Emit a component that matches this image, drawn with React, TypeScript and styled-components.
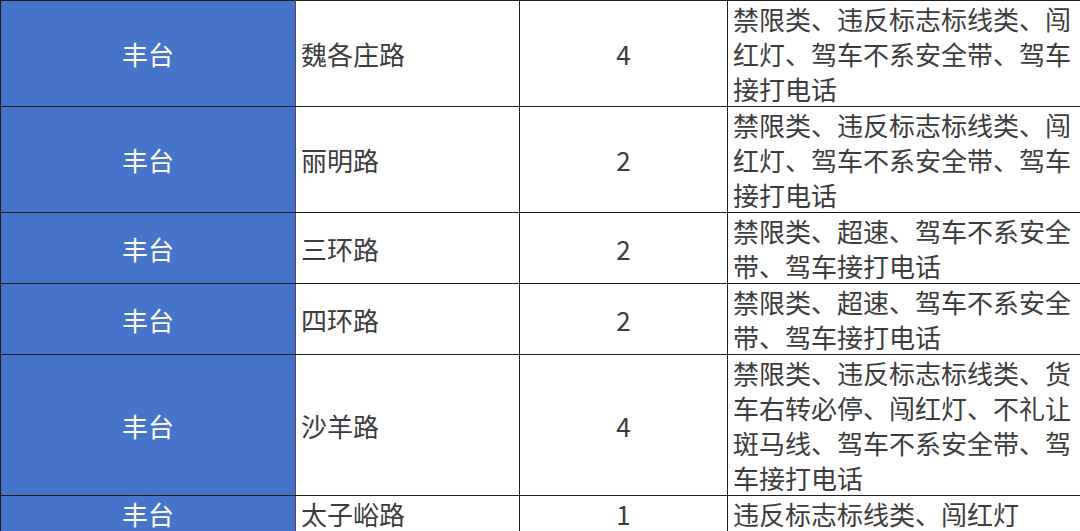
import * as React from "react";
import styled, { createGlobalStyle } from "styled-components";

interface RoadRow {
  district: string;
  road: string;
  count: number;
  violations: string;
}

const rows: RoadRow[] = [
  { district: "丰台", road: "魏各庄路", count: 4, violations: "禁限类、违反标志标线类、闯红灯、驾车不系安全带、驾车接打电话" },
  { district: "丰台", road: "丽明路", count: 2, violations: "禁限类、违反标志标线类、闯红灯、驾车不系安全带、驾车接打电话" },
  { district: "丰台", road: "三环路", count: 2, violations: "禁限类、超速、驾车不系安全带、驾车接打电话" },
  { district: "丰台", road: "四环路", count: 2, violations: "禁限类、超速、驾车不系安全带、驾车接打电话" },
  {
    district: "丰台",
    road: "沙羊路",
    count: 4,
    violations: "禁限类、违反标志标线类、货车右转必停、闯红灯、不礼让斑马线、驾车不系安全带、驾车接打电话",
  },
  { district: "丰台", road: "太子峪路", count: 1, violations: "违反标志标线类、闯红灯" },
];

const GlobalStyle = createGlobalStyle`
  html, body {
    margin: 0;
    padding: 0;
    background: #e6e6e6;
  }
  body {
    font-family: "Noto Sans CJK SC", "Noto Sans", sans-serif;
  }
`;

const Table = styled.table`
  border-collapse: collapse;
  table-layout: fixed;
  width: 1081px;
  background: #fff;
  font-size: 26px;
  line-height: 35px;
  color: #3c3c3c;
`;

const Col = styled.col<{ $width?: number }>`
  width: ${(p) => (p.$width ? `${p.$width}px` : "auto")};
`;

const Cell = styled.td<{ $align?: "left" | "center" }>`
  border: 1px solid #1e1e1e;
  padding: 0 0 0 5px;
  vertical-align: middle;
  text-align: ${(p) => p.$align || "left"};
  word-break: break-all;
`;

const DistrictCell = styled(Cell)`
  background: #4674ca;
  color: #fff;
  padding: 0;
  border-right-color: #4d4d4d;
`;

const CountCell = styled(Cell)`
  padding: 0;
`;

export default function App(): JSX.Element {
  return (
    <>
      <GlobalStyle />
      <Table>
        <colgroup>
          <Col $width={295} />
          <Col $width={224} />
          <Col $width={208} />
          <Col />
        </colgroup>
        <tbody>
          {rows.map((r, i) => (
            <tr key={i}>
              <DistrictCell $align="center">{r.district}</DistrictCell>
              <Cell>{r.road}</Cell>
              <CountCell $align="center">{r.count}</CountCell>
              <Cell>{r.violations}</Cell>
            </tr>
          ))}
        </tbody>
      </Table>
    </>
  );
}
